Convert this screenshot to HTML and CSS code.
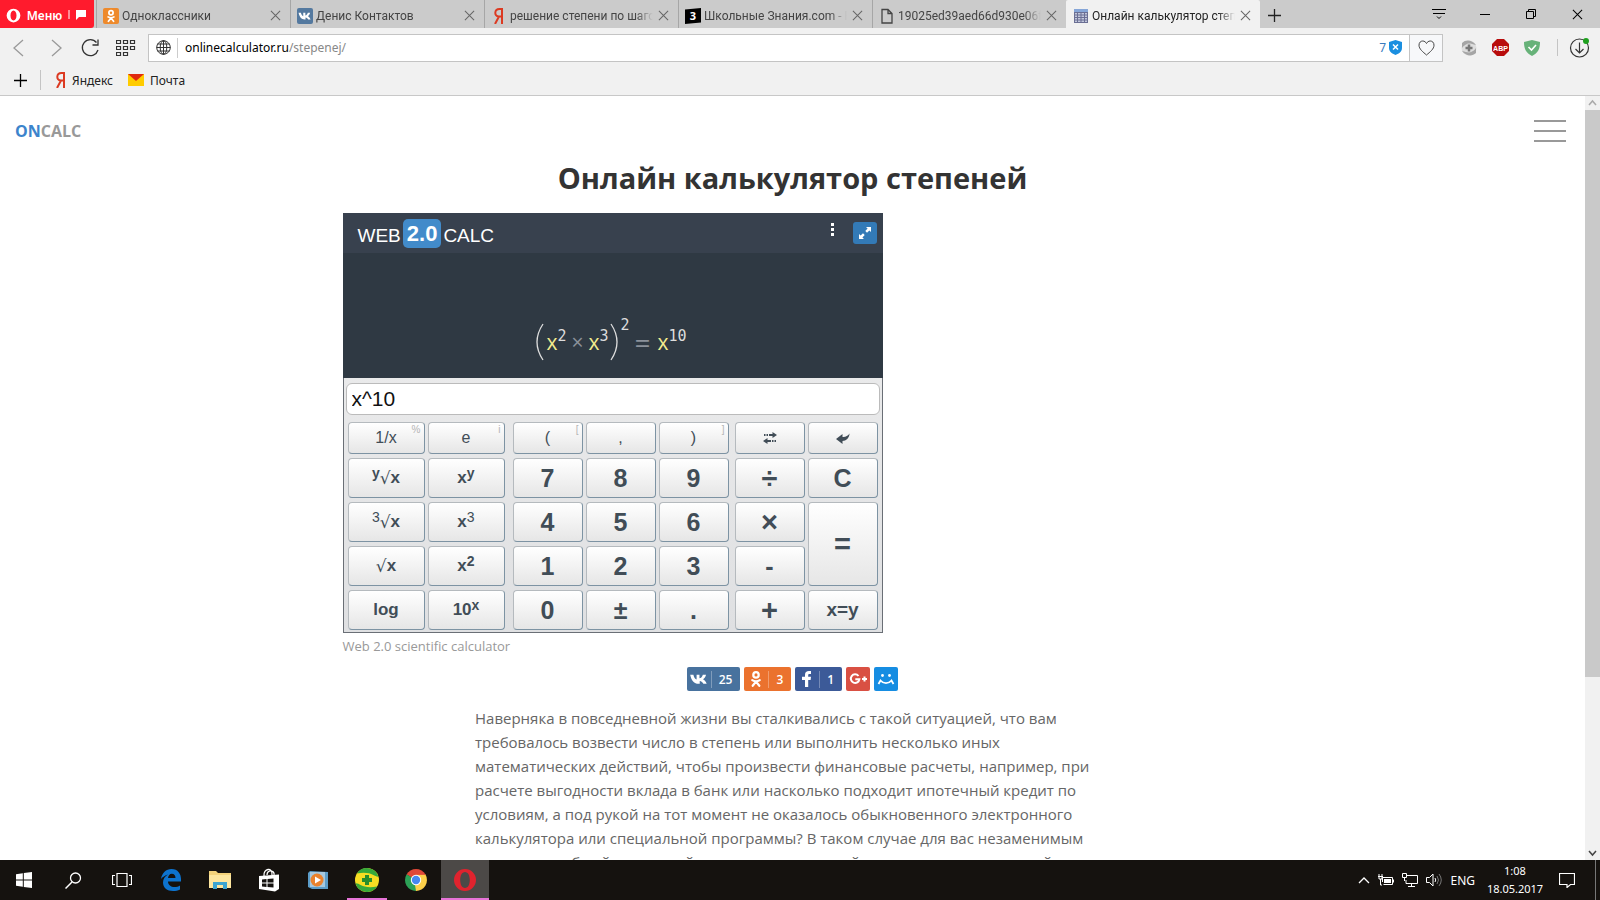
FILE: index.html
```
<!DOCTYPE html>
<html lang="ru">
<head>
    <meta charset="UTF-8">
    <meta name="viewport" content="width=device-width, initial-scale=1.0">
    <title>Онлайн калькулятор степеней</title>
    <link rel="stylesheet" href="styles.css">
</head>
<body>

<!-- Shared icons -->
<svg class="sprite" aria-hidden="true">
    <symbol id="close" viewBox="0 0 12 12">
        <path d="M1 1l10 10M11 1L1 11" fill="none" stroke="currentColor" stroke-width="1.1"/>
    </symbol>
    <symbol id="plus" viewBox="0 0 14 14">
        <path d="M7 0v14M0 7h14" fill="none" stroke="currentColor" stroke-width="1.4"/>
    </symbol>
    <symbol id="vk" viewBox="0 0 24 24">
        <path fill="currentColor" d="M12.9 18h-1.4C6 18 2.400 14 1 6.600h4c.6 3.400 2.200 5.400 4 6V6.600h3.600v4.600c2-.3 3.600-2.300 4.200-4.600h4c-.6 2.600-2 4.600-3.800 5.800 2 1 3.600 2.800 4.600 5.600h-4.200c-.8-2-2.400-3.300-4.500-3.600z"/>
    </symbol>
    <symbol id="ok" viewBox="0 0 24 24">
        <g fill="none" stroke="currentColor" stroke-linecap="round">
            <circle cx="12" cy="6.500" r="3.600" stroke-width="3"/>
            <path d="M7 13.500c3 2 7 2 10 0M12 15.500l-4.400 5.500M12 15.500l4.400 5.500" stroke-width="3"/>
        </g>
    </symbol>
    <symbol id="opera" viewBox="0 0 24 24">
        <path fill="currentColor" fill-rule="evenodd" d="M12 1a11 11 0 1 0 0 22a11 11 0 1 0 0-22zM12 4c3 0 4.800 3.600 4.800 8s-1.800 8-4.800 8-4.800-3.600-4.800-8 1.800-8 4.800-8z"/>
    </symbol>
</svg>

<header class="browser">
    <div class="tab-bar">
        <button class="menu-button" type="button">
            <svg width="15" height="15"><use href="#opera"/></svg>
            <span>Меню</span>
            <svg width="20" height="12" viewBox="0 0 20 12">
                <path d="M1 1v9" stroke="#fff"/>
                <path d="M8 1h10v7h-7l-3 3z" fill="#fff"/>
            </svg>
        </button>

        <div class="tab">
            <span class="favicon ok"><svg width="14" height="14"><use href="#ok"/></svg></span>
            <span class="tab-title">Одноклассники</span>
            <button type="button" aria-label="Закрыть"><svg width="11" height="11"><use href="#close"/></svg></button>
        </div>
        <div class="tab">
            <span class="favicon vk"><svg width="14" height="14"><use href="#vk"/></svg></span>
            <span class="tab-title">Денис Контактов</span>
            <button type="button" aria-label="Закрыть"><svg width="11" height="11"><use href="#close"/></svg></button>
        </div>
        <div class="tab">
            <span class="favicon"><svg width="16" height="16" viewBox="0 0 16 16"><path d="M11 0v16M11 1H8.500C3 1 3 8.500 8 8.500h3M8 8.500L4 16" fill="none" stroke="#dc3a22" stroke-width="2"/></svg></span>
            <span class="tab-title">решение степени по шаго</span>
            <button type="button" aria-label="Закрыть"><svg width="11" height="11"><use href="#close"/></svg></button>
        </div>
        <div class="tab">
            <span class="favicon"><svg width="16" height="16" viewBox="0 0 16 16"><path d="M0 1.500L16 0v14.500L0 16z" fill="#000"/><text x="8" y="12" text-anchor="middle" class="three">3</text></svg></span>
            <span class="tab-title">Школьные Знания.com - Р</span>
            <button type="button" aria-label="Закрыть"><svg width="11" height="11"><use href="#close"/></svg></button>
        </div>
        <div class="tab">
            <span class="favicon"><svg width="16" height="16" viewBox="0 0 16 16"><path d="M3 1.500h6l4 4v9.500H3zM9 1.500v4h4" fill="none" stroke="#444" stroke-width="1.300"/></svg></span>
            <span class="tab-title">19025ed39aed66d930e06f</span>
            <button type="button" aria-label="Закрыть"><svg width="11" height="11"><use href="#close"/></svg></button>
        </div>
        <div class="tab active">
            <span class="favicon">
                <svg width="16" height="16" viewBox="0 0 16 16">
                    <path d="M1 1h14v14H1z" fill="#c3c8dc"/>
                    <path d="M1 4.500h14M1 7h14M1 9.500h14M1 12h14M1 14.500h14M1.500 4v11M4.500 4v11M8 4v11M11.500 4v11M14.500 4v11" stroke="#6b6f94"/>
                    <path d="M1 1h14v3H1z" fill="#86a6d8"/>
                </svg>
            </span>
            <span class="tab-title">Онлайн калькулятор степ</span>
            <button type="button" aria-label="Закрыть"><svg width="11" height="11"><use href="#close"/></svg></button>
        </div>
        <button class="new-tab" type="button" aria-label="Новая вкладка"><svg width="13" height="13"><use href="#plus"/></svg></button>

        <div class="window-buttons">
            <button type="button" aria-label="Меню вкладок"><svg width="14" height="12" viewBox="0 0 14 12"><path d="M0 1.500h14M1 5.500h12M5 8.500l2 2 2-2" fill="none" stroke="#000"/></svg></button>
            <button type="button" aria-label="Свернуть"><svg width="10" height="10" viewBox="0 0 10 10"><path d="M0 5.500h10" stroke="#000"/></svg></button>
            <button type="button" aria-label="Развернуть"><svg width="10" height="10" viewBox="0 0 10 10"><path d="M.5 2.500h7v7h-7zM2.500 2V.5h7v7H8" fill="none" stroke="#000"/></svg></button>
            <button type="button" aria-label="Закрыть окно"><svg width="11" height="11"><use href="#close"/></svg></button>
        </div>
    </div>

    <div class="toolbar">
        <div class="nav-buttons">
            <button class="disabled" type="button" aria-label="Назад"><svg width="18" height="18" viewBox="0 0 18 18"><path d="M14 1L5 9l9 8" fill="none" stroke="currentColor" stroke-width="1.300"/></svg></button>
            <button class="disabled" type="button" aria-label="Вперёд"><svg width="18" height="18" viewBox="0 0 18 18"><path d="M7 1l9 8-9 8" fill="none" stroke="currentColor" stroke-width="1.300"/></svg></button>
            <button type="button" aria-label="Обновить"><svg width="20" height="20" viewBox="0 0 20 20"><path d="M16.500 4.500A8 8 0 1 0 18 12M18 1.500v5.500h-5.500" fill="none" stroke="currentColor" stroke-width="1.300"/></svg></button>
            <button type="button" aria-label="Экспресс-панель"><svg width="20" height="18" viewBox="0 0 20 18"><path d="M.5 1.500h4v3h-4zM7.500 1.500h4v3h-4zM14.500 1.500h4v3h-4zM.5 7.500h4v3h-4zM7.500 7.500h4v3h-4zM14.500 7.500h4v3h-4zM.5 13.500h4v3h-4zM7.500 13.500h4v3h-4z" fill="none" stroke="currentColor" stroke-width="1.200"/></svg></button>
        </div>

        <div class="address">
            <svg width="15" height="15" viewBox="0 0 15 15"><g fill="none" stroke="#333"><circle cx="7.500" cy="7.500" r="6.800"/><ellipse cx="7.500" cy="7.500" rx="3.300" ry="6.800"/><path d="M7.500.5v14M.5 7.500h14M1.500 4h12M1.500 11h12"/></g></svg>
            <div class="url">onlinecalculator.ru<span>/stepenej/</span></div>
            <div class="blocked">7
                <svg width="13" height="15" viewBox="0 0 13 15"><path d="M6.500 0L13 2v6c0 4-4 6-6.500 7C4 14 0 12 0 8V2z" fill="#1b8fe0"/><path d="M4 4.500l5 5M9 4.500l-5 5" stroke="#fff" stroke-width="1.500"/></svg>
            </div>
            <button class="bookmark-button" type="button" aria-label="В избранное">
                <svg width="17" height="16" viewBox="0 0 17 16"><path d="M8.500 15C5 12 1 9 1 5.200 1 2.500 2.800 1 4.700 1c1.700 0 3 1 3.800 2.500C9.300 2 10.600 1 12.300 1 14.200 1 16 2.500 16 5.200 16 9 12 12 8.500 15z" fill="none" stroke="#444"/></svg>
            </button>
        </div>

        <div class="extensions">
            <button type="button" aria-label="Расширение"><svg width="16" height="16" viewBox="0 0 16 16"><circle cx="8" cy="8" r="7.500" fill="#ddd"/><path d="M1 3c4-4 10-3 14 2-4-1-7-2-9-1S2 6 1 8zM15 13c-4 4-10 3-14-2 4 1 7 2 9 1s4-2 5-4z" fill="#a5a5a5"/><path d="M8 4.500v7M4.500 8h7" stroke="#777" stroke-width="2.500"/></svg></button>
            <button type="button" aria-label="ABP"><svg width="17" height="17" viewBox="0 0 17 17"><path d="M5 0h7l5 5v7l-5 5H5l-5-5V5z" fill="#b80c0c"/><text x="8.500" y="11.500" text-anchor="middle" class="abp">ABP</text></svg></button>
            <button type="button" aria-label="Защита"><svg width="16" height="16" viewBox="0 0 16 16"><path d="M8 0l8 2c0 7-2 11-8 14C2 13 0 9 0 2z" fill="#67b279"/><path d="M4.500 7l3 3 4.500-5" fill="none" stroke="#fff" stroke-width="1.600"/></svg></button>
        </div>
        <button class="downloads" type="button" aria-label="Загрузки">
            <svg width="21" height="21" viewBox="0 0 21 21"><circle cx="10.500" cy="11" r="9" fill="none" stroke="#333" stroke-width="1.200"/><path d="M10.500 5.500v10.500M6.500 12l4 4 4-4" fill="none" stroke="#333" stroke-width="1.200"/><circle cx="17" cy="4" r="3" fill="#1fa01f"/></svg>
        </button>
    </div>

    <nav class="bookmarks">
        <button type="button" aria-label="Добавить"><svg width="13" height="13"><use href="#plus"/></svg></button>
        <a href="#"><svg width="10" height="16" viewBox="0 0 10 16"><path d="M8 0v16M8 1H5.500C0 1 0 8.500 5 8.500h3M5 8.500L1 16" fill="none" stroke="#dc3a22" stroke-width="2"/></svg>Яндекс</a>
        <a href="#"><svg width="16" height="12" viewBox="0 0 16 12"><path d="M0 0h16v12H0z" fill="#fc0"/><path d="M0 0h16L8 7z" fill="#e02a10"/></svg>Почта</a>
    </nav>
</header>

<div class="viewport">
    <div class="page">
        <div class="site-header">
            <a class="logo" href="#"><span>ON</span>CALC</a>
            <button class="hamburger" type="button" aria-label="Меню сайта"><i></i><i></i><i></i></button>
        </div>

        <main class="container">
            <h1>Онлайн калькулятор степеней</h1>

            <div class="calc">
                <div class="calc-header">
                    <div class="calc-logo">WEB<b>2.0</b>CALC</div>
                    <button class="more" type="button" aria-label="Ещё"><i></i><i></i><i></i></button>
                    <button class="expand" type="button" aria-label="На весь экран">
                        <svg width="14" height="14" viewBox="0 0 14 14"><path d="M8 1h5v5l-1.600-1.600-2.400 2.300-1.700-1.700 2.300-2.400zM6 13H1V8l1.600 1.600L5 7.300 6.700 9l-2.300 2.400z" fill="#fff"/></svg>
                    </button>
                </div>
                <div class="display">
                    <div class="formula">
                        <svg width="8" height="38" viewBox="0 0 8 38"><path d="M7 1Q-5 19 7 37" fill="none" stroke="#ddd" stroke-width="1.300"/></svg>
                        <span class="var">x<sup>2</sup></span>
                        <span class="op">×</span>
                        <span class="var">x<sup>3</sup></span>
                        <svg width="8" height="38" viewBox="0 0 8 38"><path d="M1 1q12 18 0 36" fill="none" stroke="#ddd" stroke-width="1.300"/></svg>
                        <sup class="outer">2</sup>
                        <span class="op equals">=</span>
                        <span class="var">x<sup>10</sup></span>
                    </div>
                </div>
                <div class="entry"><input type="text" value="x^10" aria-label="Выражение"></div>

                <div class="keys">
                    <div class="key-group functions">
                        <button class="small" type="button">1/x<span class="alt">%</span></button>
                        <button class="small" type="button">e<span class="alt">i</span></button>
                        <button type="button"><sup>y</sup><span class="root">√</span>x</button>
                        <button type="button">x<sup>y</sup></button>
                        <button type="button"><sup class="thin">3</sup><span class="root">√</span>x</button>
                        <button type="button">x<sup class="thin">3</sup></button>
                        <button type="button"><span class="root">√</span>x</button>
                        <button type="button">x<sup>2</sup></button>
                        <button type="button">log</button>
                        <button type="button">10<sup>x</sup></button>
                    </div>
                    <div class="key-group digits">
                        <button class="small" type="button">(<span class="alt">[</span></button>
                        <button class="small" type="button">,</button>
                        <button class="small" type="button">)<span class="alt">]</span></button>
                        <button type="button">7</button>
                        <button type="button">8</button>
                        <button type="button">9</button>
                        <button type="button">4</button>
                        <button type="button">5</button>
                        <button type="button">6</button>
                        <button type="button">1</button>
                        <button type="button">2</button>
                        <button type="button">3</button>
                        <button type="button">0</button>
                        <button type="button">±</button>
                        <button type="button">.</button>
                    </div>
                    <div class="key-group operators">
                        <button type="button" aria-label="Переключить"><svg width="14" height="12" viewBox="0 0 14 12"><path d="M1 3h1.500M3.500 3h1.500M6 3h5M3 9h5M9 9h1.500M11.500 9H13" stroke="#414d57" stroke-width="2"/><path d="M9.500 0L14 3 9.500 6zM4.500 6L0 9l4.500 3z" fill="#414d57"/></svg></button>
                        <button type="button" aria-label="Назад"><svg width="14" height="12" viewBox="0 0 14 12"><path d="M0 7l6.500-5v3C9 5.500 12 4 13.500 1.500 13.500 6 10 9 6.500 9v3z" fill="#414d57"/></svg></button>
                        <button class="sign" type="button">÷</button>
                        <button type="button">C</button>
                        <button class="sign" type="button">×</button>
                        <button class="sign tall" type="button">=</button>
                        <button type="button">-</button>
                        <button class="sign" type="button">+</button>
                        <button class="xy" type="button">x=y</button>
                    </div>
                </div>
            </div>
            <a class="caption" href="#">Web 2.0 scientific calculator</a>

            <div class="share">
                <a class="vk" href="#"><svg width="24" height="24" viewBox="-3 -3 30 30"><use href="#vk" width="24" height="24"/></svg><span>25</span></a>
                <a class="ok" href="#"><svg width="24" height="24" viewBox="-4 -4 32 32"><use href="#ok" width="24" height="24"/></svg><span>3</span></a>
                <a class="fb" href="#"><svg width="24" height="24" viewBox="0 0 24 24"><path d="M10 20v-7H7V9.700h3V8c0-3 1.500-4 4-4h2v3h-1.300c-1.200 0-1.500.4-1.500 1.300v1.400H16l-.4 3.300h-2.400v7z" fill="#fff"/></svg><span>1</span></a>
                <a class="gplus" href="#" aria-label="Google+"><svg width="24" height="24" viewBox="0 0 24 24"><path d="M12.500 9A4.300 4.300 0 1 0 13.400 12.200H9.300M16 12h5M18.500 9.500v5" fill="none" stroke="#fff" stroke-width="2"/></svg></a>
                <a class="mail" href="#" aria-label="Мой мир"><svg width="24" height="24" viewBox="0 0 24 24"><circle cx="8.500" cy="8.500" r="1.400" fill="#fff"/><circle cx="15.500" cy="8.500" r="1.400" fill="#fff"/><path d="M4.500 17l2-3.500c3 3.500 8 3.500 11 0l2 3.500" fill="none" stroke="#fff" stroke-width="1.800"/></svg></a>
            </div>

            <p>Наверняка в повседневной жизни вы сталкивались с такой ситуацией, что вам<br>
                требовалось возвести число в степень или выполнить несколько иных<br>
                математических действий, чтобы произвести финансовые расчеты, например, при<br>
                расчете выгодности вклада в банк или насколько подходит ипотечный кредит по<br>
                условиям, а под рукой на тот момент не оказалось обыкновенного электронного<br>
                калькулятора или специальной программы? В таком случае для вас незаменимым<br>
                окажется удобный расчетный калькулятор, который точно вычисляет нужный</p>
        </main>
    </div>
    <div class="scrollbar">
        <svg width="15" height="14" viewBox="0 0 15 14"><path d="M4 9l3.500-4L11 9" fill="none" stroke="#aaa" stroke-width="1.500"/></svg>
        <div class="track"><div class="thumb"></div></div>
        <svg width="15" height="14" viewBox="0 0 15 14"><path d="M4 5l3.500 4L11 5" fill="none" stroke="#444" stroke-width="1.500"/></svg>
    </div>
</div>

<footer class="taskbar">
    <div class="apps">
        <button type="button" aria-label="Пуск"><svg width="16" height="16" viewBox="0 0 16 16"><path d="M0 2.200l6.800-1v6.300H0zM7.800 1L16 0v7.500H7.800zM0 8.500h6.800v6.300l-6.800-1zM7.800 8.500H16V16l-8.200-1z" fill="#fff"/></svg></button>
        <button type="button" aria-label="Поиск"><svg width="17" height="17" viewBox="0 0 17 17"><path d="M.5 16.500l6.500-6.500" stroke="#fff" stroke-width="1.500"/><circle cx="10.500" cy="6" r="5" fill="none" stroke="#fff" stroke-width="1.300"/></svg></button>
        <button type="button" aria-label="Представление задач"><svg width="20" height="16" viewBox="0 0 20 16"><path d="M5 1.500h10v13H5zM3 3.500H.500v9H3M17 3.500h2.500v9H17" fill="none" stroke="#fff" stroke-width="1.200"/></svg></button>
        <button type="button" aria-label="Edge"><svg width="22" height="22" viewBox="0 0 22 22"><path d="M1 10C2 4 6 0 11.500 0 18 0 21 5 21 10v2.500H8c0 3.500 3 5.500 6.500 5.500 2 0 4-.6 5.500-1.600v4.100c-2 1.100-4.300 1.500-7 1.500-6 0-10-3.500-10-8.500 0-3.500 2-6.500 5-8C5 6.500 2.500 8 1 10zM8 9h7.500c0-2.500-1.200-4.300-3.700-4.300C9.600 4.700 8.400 6.500 8 9z" fill="#0d73ce"/></svg></button>
        <button type="button" aria-label="Проводник"><svg width="22" height="20" viewBox="0 0 22 20"><path d="M0 1h7l2 2h13v15H0z" fill="#f3d27a"/><path d="M0 5h22v13H0z" fill="#fde69e"/><path d="M4 19v-7h14v7h-4v-4H8v4z" fill="#3ba4d0"/></svg></button>
        <button type="button" aria-label="Магазин"><svg width="22" height="24" viewBox="0 0 22 24"><path d="M6 8C5 0 15-1 14 7M9 7C9 1 17 2 16 7" fill="none" stroke="#fff" stroke-width="1.300"/><path d="M1 8l20-1.500V21l-4 2.500L1 21z" fill="#fff"/><path d="M4 11.500l4.500-.5v3.500H4zM9.500 11l6-.5v4h-6zM4 15.500h4.500V19L4 18.500zM9.500 15.500h6v4l-6-.5z" fill="#15120f"/></svg></button>
        <button type="button" aria-label="Проигрыватель"><svg width="20" height="20" viewBox="0 0 20 20"><path d="M2 1l18 1v17H4l-4-2V3z" fill="#5b9cc8"/><path d="M2 2h15v15H2z" fill="#a6c8de"/><circle cx="9" cy="10" r="6.500" fill="#e9822d"/><path d="M7 6.500l6 3.500-6 3.500z" fill="#fff"/></svg></button>
        <button class="running" type="button" aria-label="360"><svg width="24" height="24" viewBox="0 0 24 24"><circle cx="12" cy="12" r="12" fill="#f6dd23"/><path d="M2 5.400A12 12 0 0 1 23.500 8.700C19 9 17 3 2 5.400zM22 18.600A12 12 0 0 1 .5 15.300C5 15 7 21 22 18.600z" fill="#36a93a"/><path d="M12 7v10M7 12h10" stroke="#278d2c" stroke-width="4"/></svg></button>
        <button type="button" aria-label="Chrome"><svg width="22" height="22" viewBox="0 0 22 22"><path d="M11 11L1.500 5.500A11 11 0 0 1 20.500 5.500z" fill="#df4838"/><path d="M11 11l9.500-5.500A11 11 0 0 1 11 22z" fill="#fdd04a"/><path d="M11 11v11A11 11 0 0 1 1.500 5.500z" fill="#2ca156"/><path d="M11 5.500h9.500L16 13z" fill="#fdd04a"/><path d="M1.500 5.500L6.500 14l4.500-3z" fill="#2ca156"/><path d="M16 13l-5 9-1-6z" fill="#fdd04a"/><path d="M1.800 5.300h18.500v.8H11z" fill="#df4838"/><circle cx="11" cy="11" r="5.200" fill="#fff"/><circle cx="11" cy="11" r="4.200" fill="#4688f1"/></svg></button>
        <button class="running current" type="button" aria-label="Opera"><svg width="24" height="24"><use href="#opera"/></svg></button>
    </div>
    <div class="tray">
        <svg width="12" height="8" viewBox="0 0 12 8"><path d="M1 7l5-5 5 5" fill="none" stroke="#fff" stroke-width="1.300"/></svg>
        <svg width="16" height="12" viewBox="0 0 16 12"><path d="M4.500 8V3.500h10v7h-9M1 0v2M4 0v2M0 2.500h5M1 3v2h3V3M2.500 5v6H4" fill="none" stroke="#fff"/><path d="M6 5h7v4H6zM15 5.500h1v3h-1z" fill="#fff"/></svg>
        <svg width="16" height="14" viewBox="0 0 16 14"><path d="M5 2.500h10.500v8H4V7M9.500 10.500v3M6 13.500h7M.5.500h4v4h-4zM2.500 5v3" fill="none" stroke="#fff"/></svg>
        <svg width="16" height="14" viewBox="0 0 16 14"><path d="M.5 4.500h3L7 1v12L3.500 9.500h-3z" fill="none" stroke="#fff"/><path d="M9 5q1.500 2 0 4" fill="none" stroke="#fff"/><path d="M11 3q3 4 0 8M13 1q4.500 6 0 12" fill="none" stroke="#777"/></svg>
        <span>ENG</span>
        <time>1:08<br>18.05.2017</time>
        <button type="button" aria-label="Уведомления"><svg width="16" height="16" viewBox="0 0 16 16"><path d="M.5 1.500h15v11h-4L8 15.500v-3H.5z" fill="none" stroke="#fff" stroke-width="1.200"/></svg></button>
    </div>
</footer>

</body>
</html>
```
FILE: styles.css
```
* {
    box-sizing: border-box;
}

body {
    margin: 0;
    height: 100vh;
    display: flex;
    flex-direction: column;
    overflow: hidden;
    font-family: "Open Sans", "Noto Sans", sans-serif;
    background: #fff;
    color: #222;
}

button {
    display: flex;
    align-items: center;
    justify-content: center;
    margin: 0;
    padding: 0;
    border: 0;
    background: none;
    color: inherit;
    font: inherit;
}

a {
    color: inherit;
    text-decoration: none;
}

svg {
    display: block;
    flex: none;
}

.sprite {
    display: none;
}

/* Browser window */
.browser {
    flex: none;
    background: #f1f1f1;
    border-bottom: 1px solid #c8c8c8;
    font-family: "Noto Sans", sans-serif;
    font-size: 12px;
}

.tab-bar {
    display: flex;
    height: 28px;
    background: #cbcbcb;
}

.menu-button {
    width: 94px;
    margin-right: 2px;
    padding-top: 2px;
    gap: 6px;
    flex: none;
    background: #ff1b2d;
    border-radius: 0 0 3px 0;
    color: #fff;
    font-weight: 600;
}

.tab {
    display: flex;
    align-items: center;
    flex: 0 1 194px;
    min-width: 0;
    padding: 3px 9px 0 6px;
    border-left: 1px solid #a6a6a6;
    color: #444;
}

.tab.active {
    background: #f1f1f1;
    border-color: #f1f1f1;
    border-radius: 2px 2px 0 0;
    color: #222;
}

.tab button {
    width: 12px;
    color: #666;
}

.favicon {
    display: flex;
    align-items: center;
    justify-content: center;
    flex: none;
    width: 16px;
    height: 16px;
    border-radius: 2px;
    color: #fff;
}

.favicon.ok {
    background: #ee8a2c;
}

.favicon.vk {
    background: #54799f;
}

.three {
    font: bold 11px "Open Sans", sans-serif;
    fill: #fff;
}

.tab-title {
    flex: 1;
    margin: 0 4px 0 3px;
    overflow: hidden;
    white-space: nowrap;
    font-family: Roboto, sans-serif;
    mask-image: linear-gradient(to right, #000 88%, transparent);
}

.new-tab {
    width: 28px;
    padding-top: 3px;
}

.window-buttons {
    display: flex;
    margin-left: auto;
}

.window-buttons button {
    width: 46px;
    color: #000;
}

.toolbar {
    display: flex;
    align-items: center;
    height: 39px;
    padding-right: 10px;
}

.nav-buttons {
    display: flex;
    width: 148px;
    color: #333;
}

.nav-buttons button {
    width: 36px;
}

.nav-buttons .disabled {
    color: #999;
}

.address {
    display: flex;
    align-items: center;
    flex: 1;
    height: 28px;
    padding-left: 7px;
    border: 1px solid #c4c4c4;
    background: #fff;
}

.url {
    flex: 1;
    margin-left: 6px;
    padding-left: 7px;
    border-left: 1px solid #ccc;
    line-height: 20px;
    color: #000;
}

.url span {
    color: #888;
}

.blocked {
    display: flex;
    align-items: center;
    gap: 3px;
    margin-right: 7px;
    color: #3a7bbd;
}

.bookmark-button {
    width: 33px;
    height: 26px;
    border-left: 1px solid #c4c4c4;
    background: #f7f8fa;
}

.extensions {
    display: flex;
    gap: 15px;
    margin-left: 18px;
    padding-right: 17px;
    border-right: 1px solid #c4c4c4;
}

.abp {
    font: bold 7px "Liberation Sans", sans-serif;
    fill: #fff;
}

.downloads {
    margin-left: 11px;
}

.bookmarks {
    display: flex;
    align-items: center;
    height: 28px;
    padding: 0 0 2px 14px;
    color: #222;
}

.bookmarks button {
    width: 27px;
    height: 20px;
    justify-content: flex-start;
    border-right: 1px solid #c4c4c4;
    color: #000;
}

.bookmarks a {
    display: flex;
    align-items: center;
    gap: 6px;
    margin-left: 15px;
}

/* Page */
.viewport {
    display: flex;
    flex: 1;
    min-height: 0;
}

.page {
    flex: 1;
    min-width: 0;
    overflow: hidden;
}

.site-header {
    display: flex;
    align-items: center;
    justify-content: space-between;
    height: 60px;
    padding: 9px 19px 0 15px;
}

.logo {
    font-size: 16px;
    font-weight: bold;
    color: #999;
}

.logo span {
    color: #3c84cc;
}

.hamburger {
    flex-direction: column;
    gap: 8px;
    width: 32px;
}

.hamburger i {
    width: 100%;
    height: 2px;
    background: #999;
}

.container {
    max-width: 900px;
    margin: 0 auto;
}

h1 {
    margin: 0 0 13px;
    font-size: 29px;
    line-height: 44px;
    text-align: center;
    color: #333;
}

.caption {
    display: block;
    width: max-content;
    margin-top: 3px;
    font-size: 13px;
    line-height: 20px;
    color: #999;
}

.container p {
    max-width: 635px;
    margin: 15px auto 0;
    font-size: 15px;
    line-height: 24px;
    white-space: nowrap;
    color: #666;
}

/* Calculator */
.calc {
    width: 60%;
    border: 1px solid #6a6f76;
    background: linear-gradient(#f0f0f0, #dfe0e2);
    font-family: "Liberation Sans", Arial, sans-serif;
    color: #414d57;
}

.calc-header {
    display: flex;
    align-items: center;
    height: 40px;
    margin: -1px -1px 0;
    padding: 0 6px 0 15px;
    background: #38414e;
    color: #fff;
}

.calc-logo {
    display: flex;
    align-items: center;
    flex: 1;
    padding-top: 5px;
    font-size: 19px;
}

.calc-logo b {
    margin: -5px 2px 0;
    padding: 0 4px;
    border-radius: 5px;
    background: #428bca;
    font-size: 22px;
    line-height: 29px;
}

.more {
    flex-direction: column;
    gap: 2px;
    width: 20px;
    height: 24px;
    margin-right: 10px;
    padding-bottom: 7px;
}

.more i {
    width: 3px;
    height: 3px;
    background: #fff;
}

.expand {
    width: 24px;
    height: 22px;
    border-radius: 3px;
    background: #337ab7;
}

.display {
    display: flex;
    justify-content: center;
    align-items: flex-end;
    height: 125px;
    margin: 0 -1px;
    padding-bottom: 17px;
    background: #2f3943;
}

.formula {
    display: flex;
    align-items: center;
    font-family: "Open Sans", sans-serif;
    font-size: 21px;
    line-height: 36px;
    color: #ddd;
}

.formula sup {
    font-family: "DejaVu Sans Mono", monospace;
    font-size: 15px;
    line-height: 0;
    vertical-align: 9px;
    color: #ddd;
}

.var {
    margin: 0 2px;
    color: #f4ec8e;
}

.op {
    margin: 0 3px;
    color: #8b919a;
}

.formula .outer {
    align-self: flex-start;
    margin-left: 2px;
    line-height: 4px;
}

.formula .equals {
    margin: 0 5px;
    font-size: 28px;
}

.entry {
    padding: 5px 2px 7px;
}

.entry input {
    display: block;
    width: 100%;
    height: 32px;
    padding: 0 5px;
    border: 1px solid #bbb;
    border-radius: 6px;
    background: #fff;
    font: 21px "Liberation Sans", Arial, sans-serif;
    color: #111;
}

.keys {
    display: flex;
    gap: 7px;
    padding: 0 4px 2px;
}

.key-group {
    display: grid;
    grid-template-rows: 32px repeat(4, 40px);
    gap: 4px 3px;
}

.functions {
    flex: 157;
    grid-template-columns: repeat(2, 1fr);
}

.digits {
    flex: 216;
    grid-template-columns: repeat(3, 1fr);
    margin: 0 -1px 0 1px;
}

.operators {
    flex: 143;
    grid-template-columns: repeat(2, 1fr);
}

.keys button {
    position: relative;
    border: 1px solid #b5babe;
    border-right-color: #7d93a3;
    border-bottom-color: #7d93a3;
    border-radius: 4px;
    background: linear-gradient(#fff, #e6e6e6);
    font-size: 25px;
    font-weight: bold;
}

.keys .functions button {
    font-size: 17px;
}

.keys .key-group .small {
    font-size: 16px;
    font-weight: normal;
}

.keys .sign {
    font-size: 29px;
}

.keys .xy {
    font-size: 19px;
}

.keys sup {
    align-self: flex-start;
    margin-top: 14px;
    font-size: 14px;
    line-height: 0;
}

.keys .thin {
    font-weight: normal;
}

.root {
    font-family: "DejaVu Sans", sans-serif;
    font-weight: normal;
}

.tall {
    grid-row: span 2;
}

.alt {
    position: absolute;
    top: 1px;
    right: 3px;
    font-size: 10px;
    color: #b5b5b5;
}

/* Share buttons */
.share {
    display: flex;
    justify-content: center;
    gap: 4px;
    margin-top: 11px;
}

.share a {
    display: flex;
    align-items: center;
    height: 24px;
    border-radius: 2px;
    color: #fff;
    font-size: 12px;
    font-weight: 600;
}

.share span {
    padding: 0 8px 0 7px;
    border-left: 1px solid rgba(255, 255, 255, 0.3);
}

.share .vk {
    background: #48729e;
}

.share .ok {
    background: #eb722e;
}

.share .fb {
    background: #3c5a98;
}

.share .gplus {
    background: #d95043;
}

.share .mail {
    background: #168de2;
}

.scrollbar {
    display: flex;
    flex-direction: column;
    width: 15px;
    background: #f1f1f1;
}

.track {
    flex: 1;
}

.thumb {
    height: 77%;
    background: #c9c9c9;
}

/* Windows taskbar */
.taskbar {
    display: flex;
    justify-content: space-between;
    flex: none;
    height: 40px;
    background: #15120f;
    color: #fff;
}

.apps {
    display: flex;
    gap: 1px;
}

.apps button {
    width: 48px;
}

.apps .running {
    width: 40px;
    margin: 0 4px;
    border-top: 2px solid transparent;
    border-bottom: 2px solid #e774d8;
}

.apps .current {
    width: 48px;
    margin: 0;
    background: #4c4947;
    color: #e0232e;
}

.tray {
    display: flex;
    align-items: center;
    gap: 8px;
    margin-right: 4px;
    padding-right: 20px;
    border-right: 1px solid #777;
    font-family: "Noto Sans", sans-serif;
    font-size: 12px;
}

.tray time {
    width: 64px;
    font-size: 11px;
    line-height: 18px;
    text-align: center;
}

.tray button {
    margin-left: 4px;
}
```
